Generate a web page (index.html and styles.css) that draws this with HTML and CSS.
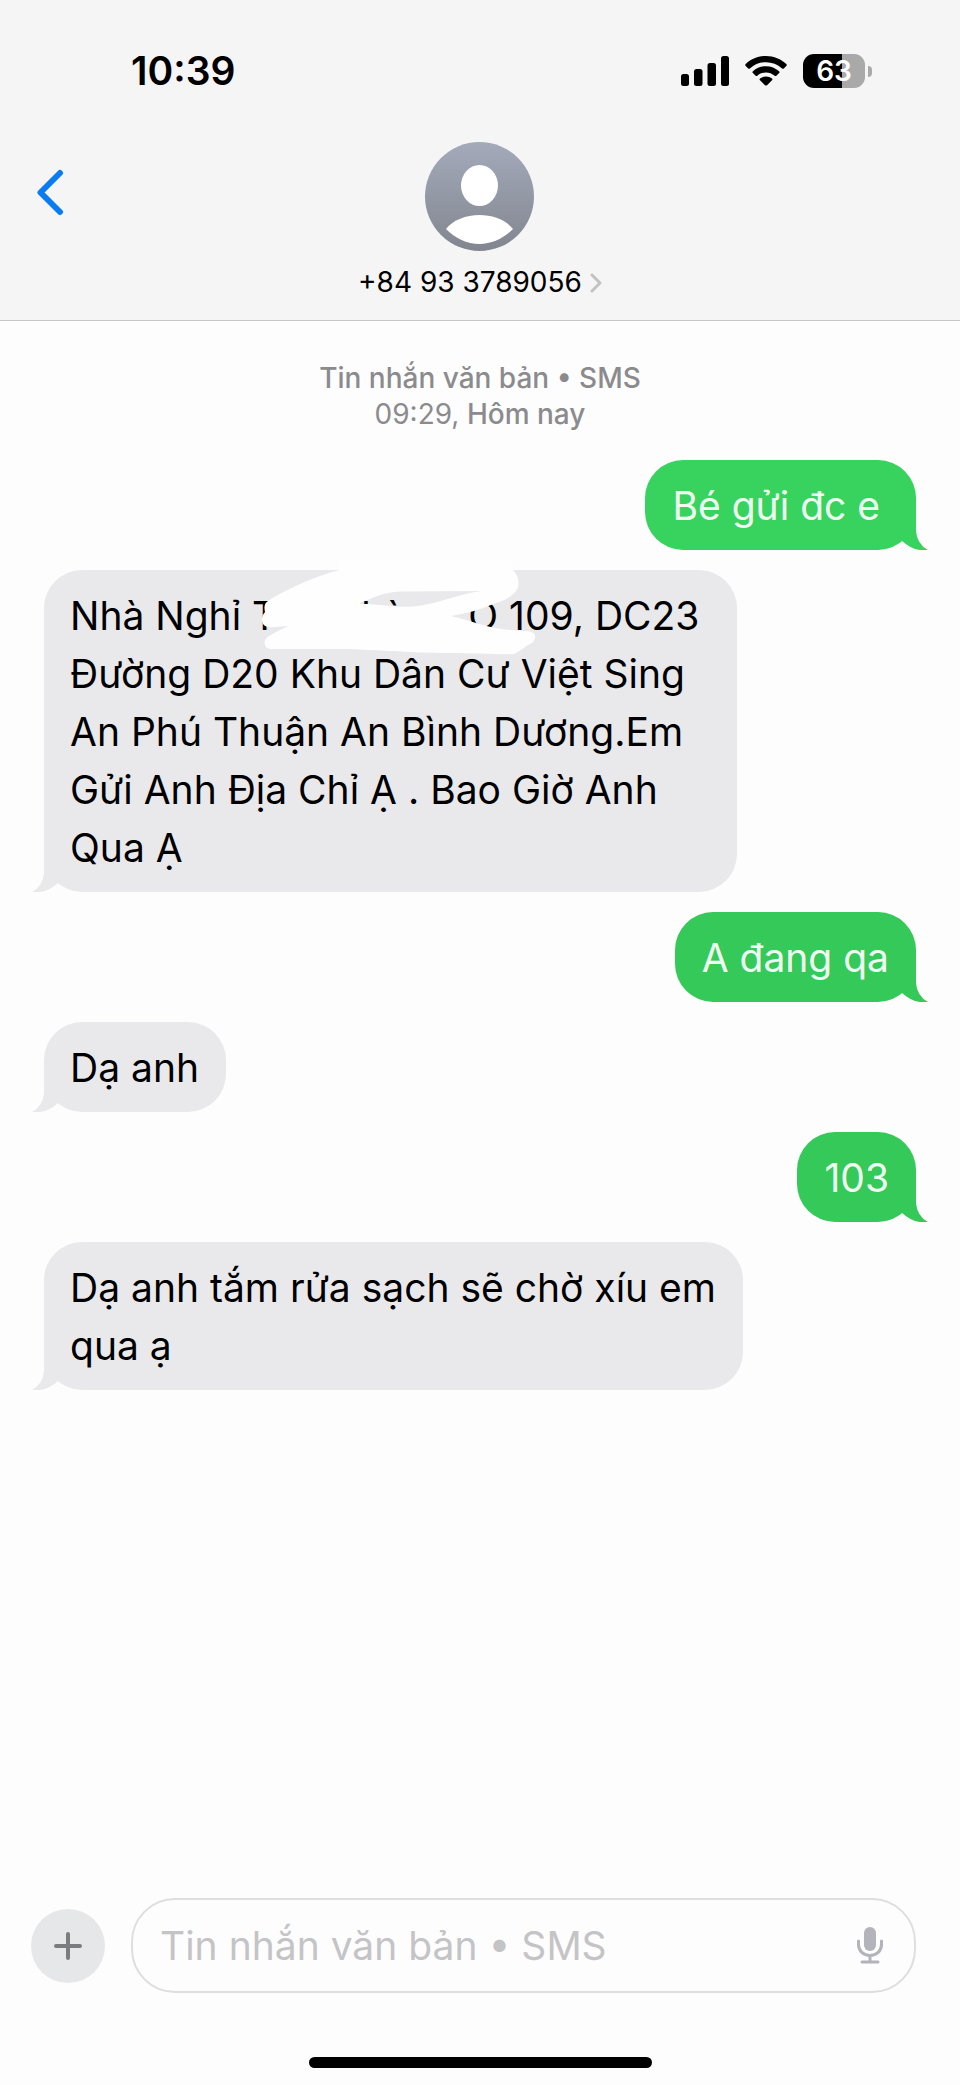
FILE: index.html
```html
<!DOCTYPE html>
<html lang="vi">
<head>
<meta charset="utf-8">
<meta name="viewport" content="width=device-width, initial-scale=1">
<title>+84 93 3789056</title>
<link rel="stylesheet" href="styles.css">
</head>
<body>
<svg class="defs" aria-hidden="true">
  <symbol id="tail" viewBox="0 0 40 40">
    <path d="M0 0H28V21Q29 34 40 40Q26 42 14 31L0 20Z"/>
  </symbol>
</svg>
<header class="header">
  <div class="status">
    <time class="clock">10:39</time>
    <div class="indicators">
      <svg class="signal" viewBox="0 0 48 30" aria-label="Signal">
        <rect x="0" y="18" width="8" height="12" rx="2.5"/>
        <rect x="13" y="13" width="8.500" height="17" rx="2.500"/>
        <rect x="26.500" y="7" width="8.500" height="23" rx="2.500"/>
        <rect x="40" y="0" width="8" height="30" rx="2.500"/>
      </svg>
      <svg class="wifi" viewBox="0 0 42 30" aria-label="Wi-Fi">
        <path d="M21 0C29 0 36 3 41.300 8Q42.200 9 41.300 10L38.800 12.500Q38 13.200 37.100 12.400C32.500 8.300 27 6.200 21 6.200S9.500 8.300 4.900 12.400Q4 13.200 3.200 12.500L.7 10Q-.2 9 .7 8C6 3 13 0 21 0Z"/>
        <path d="M21 10.200C26 10.200 30.500 12.100 34.100 15.300Q35 16.200 34.100 17.100L31.400 19.700Q30.600 20.400 29.700 19.700C27.200 17.600 24.300 16.400 21 16.400S14.800 17.600 12.300 19.700Q11.400 20.400 10.600 19.700L7.900 17.100Q7 16.200 7.900 15.300C11.500 12.100 16 10.200 21 10.200Z"/>
        <path d="M21 20.500C23.400 20.500 25.400 21.300 27 22.600Q27.800 23.400 27 24.200L22 29.200Q21 30 20 29.200L15 24.200Q14.200 23.400 15 22.600C16.600 21.300 18.600 20.500 21 20.500Z"/>
      </svg>
      <div class="battery"><span class="level">63</span><span class="cap"></span></div>
    </div>
  </div>
  <div class="contact-bar">
    <button class="back" aria-label="Quay lại">
      <svg viewBox="0 0 28 48"><path d="M24 4 L4.500 23.500 L24 43"/></svg>
    </button>
    <a class="contact" href="#">
      <svg class="avatar" viewBox="0 0 109 109" aria-hidden="true">
        <defs><linearGradient id="shade" x1="0" y1="0" x2="0" y2="1"><stop offset="0" stop-color="#a4aabb"/><stop offset="1" stop-color="#82868f"/></linearGradient></defs>
        <circle cx="54.500" cy="54.500" r="54.500" fill="url(#shade)"/>
        <ellipse cx="54.500" cy="43.500" rx="18.500" ry="20.500" fill="#fff"/>
        <path d="M21 87C28 78 41 73 54.500 73S81 78 88 87C79 96 67 102 54.500 102S30 96 21 87Z" fill="#fff"/>
      </svg>
      <span class="name">+84 93 3789056
        <svg class="chevron" viewBox="0 0 12 20" aria-hidden="true"><path d="M2 2 L10 10 L2 18"/></svg>
      </span>
    </a>
  </div>
</header>

<main class="thread">
  <p class="meta">Tin nhắn văn bản • SMS<br><time>09:29,</time> Hôm nay</p>
  <div class="bubble sent bright">Bé gửi đc e<svg class="tail"><use href="#tail"/></svg></div>
  <div class="bubble received roomy">Nhà Nghỉ T<span class="gap wide"></span>hà<span class="gap"></span>O 109, DC23<br>Đường D20 Khu Dân Cư Việt Sing<br>An Phú Thuận An Bình Dương.Em<br>Gửi Anh Địa Chỉ Ạ . Bao Giờ Anh<br>Qua Ạ<svg class="tail"><use href="#tail"/></svg>
    <svg class="scribble" viewBox="254 558 290 100" aria-hidden="true">
      <path fill-rule="evenodd" d="M340 570C315 576 285 590 268 601Q263 604 265 612Q260 617 263 624Q266 628 274 627L289 626Q279 630 269 636Q262 641 266 647Q268 649 273 649H330C380 649 405 653 450 653C480 653 500 655 514 654Q518 652 528 645Q536 642 535 635Q533 631 525 631L510 630C490 629 470 620 451 616C470 613 480 609 491 605C500 602 507 600 513 594Q520 589 518 579Q517 574 512 569V560H340ZM360 603C372 598 385 592 400 591.500L481 591C458 594 435 605 413 606.500C395 608 385 604 360 604Z"/>
    </svg>
  </div>
  <div class="bubble sent">A đang qa<svg class="tail"><use href="#tail"/></svg></div>
  <div class="bubble received">Dạ anh<svg class="tail"><use href="#tail"/></svg></div>
  <div class="bubble sent">103<svg class="tail"><use href="#tail"/></svg></div>
  <div class="bubble received">Dạ anh tắm rửa sạch sẽ chờ xíu em<br>qua ạ<svg class="tail"><use href="#tail"/></svg></div>
</main>

<footer class="footer">
  <form class="composer">
    <button class="plus" type="button" aria-label="Thêm"><svg viewBox="0 0 28 28"><path d="M14 2V26M2 14H26"/></svg></button>
    <div class="field">
      <input type="text" aria-label="Tin nhắn" placeholder="Tin nhắn văn bản • SMS">
      <button class="mic" type="button" aria-label="Đọc chính tả">
        <svg viewBox="0 0 26 37"><rect x="7" y="0" width="12" height="24" rx="6"/><path d="M1.500 14V17.500C1.500 24 6.500 28.500 13 28.500S24.500 24 24.500 17.500V14M13 29V35M5 35H21"/></svg>
      </button>
    </div>
  </form>
  <div class="home"></div>
</footer>
</body>
</html>
```
FILE: styles.css
```css
* { box-sizing: border-box; }
body {
  margin: 0;
  min-height: 100vh;
  display: flex;
  flex-direction: column;
  background: #fdfdfd;
  color: #000;
  font-family: Inter, "Liberation Sans", sans-serif;
}
button { padding: 0; border: 0; background: none; cursor: pointer; }
svg { display: block; }
.defs { position: absolute; width: 0; height: 0; }

.header {
  display: flex;
  flex-direction: column;
  padding-bottom: 20px;
  background: #f5f5f5;
  border-bottom: 1px solid #c6c6c6;
}
.status {
  display: flex;
  justify-content: space-between;
  align-items: center;
  height: 142px;
  padding: 0 88px 0 131px;
}
.clock { font-size: 39px; font-weight: 600; line-height: 44px; }
.indicators { display: flex; align-items: center; gap: 16px; }
.signal { width: 48px; height: 30px; }
.wifi { width: 42px; height: 30px; }
.battery { display: flex; align-items: center; gap: 3px; }
.level {
  width: 62px;
  border-radius: 11px;
  background: linear-gradient(to right, #000 63%, #a9a9a9 63%);
  color: #fff;
  font-size: 28px;
  font-weight: 600;
  line-height: 34px;
  text-align: center;
}
.cap { width: 4px; height: 11px; border-radius: 0 4px 4px 0; background: #a9a9a9; }

.contact-bar {
  display: grid;
  grid-template-columns: 1fr auto 1fr;
}
.back { justify-self: start; align-self: start; margin: 27px 0 0 36px; }
.back svg { width: 28px; height: 48px; }
.back path { fill: none; stroke: #0b7bf0; stroke-width: 6; stroke-linecap: round; stroke-linejoin: round; }
.contact {
  display: flex;
  flex-direction: column;
  align-items: center;
  gap: 14px;
  color: inherit;
  text-decoration: none;
}
.avatar { width: 109px; height: 109px; }
.name { display: flex; align-items: center; gap: 8px; font-size: 28px; line-height: 35px; }
.chevron { width: 12px; height: 20px; }
.chevron path { fill: none; stroke: #c2c2c4; stroke-width: 3; stroke-linecap: round; stroke-linejoin: round; }

.thread {
  flex: 1;
  display: flex;
  flex-direction: column;
  align-items: flex-start;
  gap: 20px;
  padding: 39px 44px;
}
.meta {
  align-self: center;
  margin: 0 0 8px;
  color: #8b8b8e;
  font-size: 28px;
  font-weight: 500;
  line-height: 36px;
  text-align: center;
}
.meta time { font-weight: 400; }
.bubble {
  position: relative;
  padding: 17px 27px 15px;
  border-radius: 38px;
  font-size: 39px;
  line-height: 58px;
}
.received { background: #e9e9eb; color: #000; fill: #e9e9eb; padding-left: 26px; }
.sent { align-self: flex-end; background: #35c959; color: #effff2; fill: #35c959; }
.bright { background: #38d35f; fill: #38d35f; padding-right: 36px; }
.roomy { padding-right: 38px; }
.tail { position: absolute; bottom: 0; width: 40px; height: 40px; }
.sent .tail { right: -12px; }
.received .tail { left: -12px; transform: scaleX(-1); }
.gap { display: inline-block; width: 62px; }
.wide { width: 84px; }
.scribble { position: absolute; left: 210px; top: -12px; width: 290px; height: 100px; fill: #fefefe; }

.footer { padding-bottom: 17px; }
.composer { display: flex; align-items: center; gap: 26px; padding: 0 44px 0 31px; }
.plus { display: grid; place-items: center; width: 74px; height: 74px; border-radius: 50%; background: #e6e7e9; }
.plus svg { width: 28px; height: 28px; }
.plus path { fill: none; stroke: #7c7c80; stroke-width: 4; stroke-linecap: round; }
.field {
  flex: 1;
  display: flex;
  align-items: center;
  height: 95px;
  padding: 0 31px 0 27px;
  border: 2px solid #dedede;
  border-radius: 44px;
}
.field input {
  flex: 1;
  min-width: 0;
  padding: 0;
  border: 0;
  outline: 0;
  background: none;
  font: inherit;
  font-size: 39px;
  line-height: 58px;
}
.field input::placeholder { color: #c4c4c6; opacity: 1; }
.mic svg { width: 26px; height: 37px; }
.mic rect { fill: #b2b3bb; }
.mic path { fill: none; stroke: #b2b3bb; stroke-width: 3; stroke-linecap: round; }
.home { width: 36%; max-width: 343px; height: 11px; margin: 64px auto 0; border-radius: 6px; background: #000; }
```
